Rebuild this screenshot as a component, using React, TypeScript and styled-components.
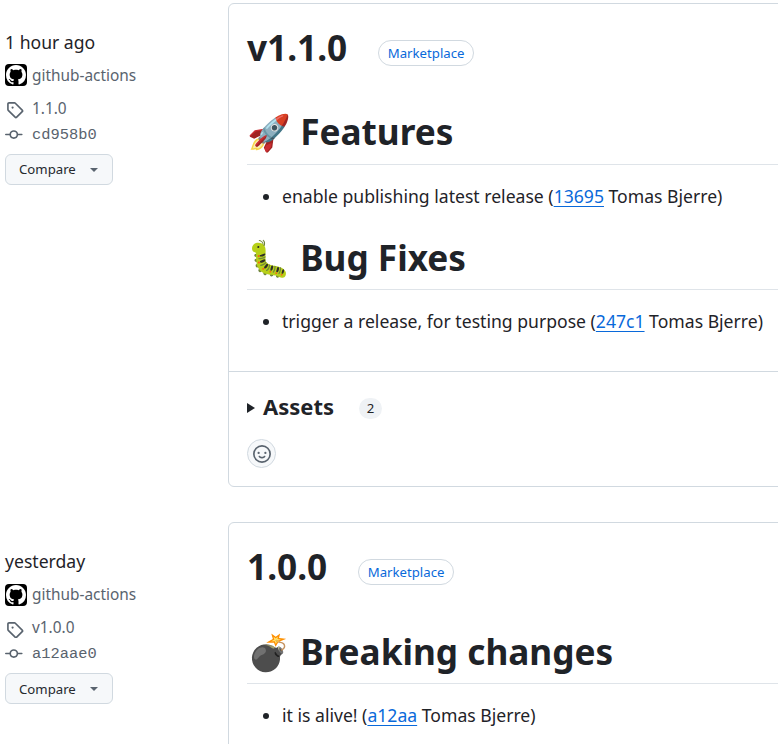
import React from 'react';
import styled, { createGlobalStyle } from 'styled-components';

const ICONS = {
  mark: 'M8 0c4.42 0 8 3.58 8 8a8.013 8.013 0 0 1-5.45 7.59c-.4.08-.55-.17-.55-.38 0-.27.01-1.13.01-2.2 0-.75-.25-1.23-.54-1.48 1.78-.2 3.65-.88 3.65-3.95 0-.88-.31-1.59-.82-2.15.08-.2.36-1.02-.08-2.12 0 0-.67-.22-2.2.82-.64-.18-1.32-.27-2-.27-.68 0-1.36.09-2 .27-1.53-1.03-2.2-.82-2.2-.82-.44 1.1-.16 1.92-.08 2.12-.51.56-.82 1.28-.82 2.15 0 3.06 1.86 3.75 3.64 3.95-.23.2-.44.55-.51 1.07-.46.21-1.61.55-2.33-.66-.15-.24-.6-.83-1.23-.82-.67.01-.27.38.01.53.34.19.73.9.82 1.13.16.45.68 1.31 2.69.94 0 .67.01 1.3.01 1.49 0 .21-.15.45-.55.38A7.995 7.995 0 0 1 0 8c0-4.42 3.58-8 8-8Z',
  tag: 'M1 7.775V2.75C1 1.784 1.784 1 2.75 1h5.025c.464 0 .91.184 1.238.513l6.25 6.25a1.75 1.75 0 0 1 0 2.474l-5.026 5.026a1.75 1.75 0 0 1-2.474 0l-6.25-6.25A1.752 1.752 0 0 1 1 7.775Zm1.5 0c0 .066.026.13.073.177l6.25 6.25a.25.25 0 0 0 .354 0l5.025-5.025a.25.25 0 0 0 0-.354l-6.25-6.25a.25.25 0 0 0-.177-.073H2.75a.25.25 0 0 0-.25.25ZM6 5a1 1 0 1 1 0 2 1 1 0 0 1 0-2Z',
  commit: 'M11.93 8.5a4.002 4.002 0 0 1-7.86 0H.75a.75.75 0 0 1 0-1.5h3.32a4.002 4.002 0 0 1 7.86 0h3.32a.75.75 0 0 1 0 1.5Zm-1.43-.75a2.5 2.5 0 1 0-5 0 2.5 2.5 0 0 0 5 0Z',
  smiley: 'M8 0a8 8 0 1 1 0 16A8 8 0 0 1 8 0ZM1.5 8a6.5 6.5 0 1 0 13 0 6.5 6.5 0 0 0-13 0Zm3.82 1.636a.75.75 0 0 1 1.038.175l.007.009c.103.118.22.222.35.31.264.178.683.37 1.285.37.602 0 1.02-.192 1.285-.371.13-.088.247-.192.35-.31l.007-.008a.75.75 0 0 1 1.222.87l-.022-.015c.02.013.021.015.021.015v.001l-.001.002-.002.003-.005.007-.014.019a2.066 2.066 0 0 1-.184.213c-.16.166-.338.316-.53.445-.63.418-1.37.638-2.127.629-.946 0-1.652-.308-2.126-.63a3.331 3.331 0 0 1-.715-.657l-.014-.02-.005-.006-.002-.003v-.002h-.001l.613-.432-.614.43a.75.75 0 0 1 .183-1.044ZM12 7a1 1 0 1 1-2 0 1 1 0 0 1 2 0ZM5 8a1 1 0 1 1 0-2 1 1 0 0 1 0 2Zm5.25 2.25.592.416a97.71 97.71 0 0 0-.592-.416Z',
};

const Octicon = ({ name, size }: { name: keyof typeof ICONS; size: number }) => (
  <svg width={size} height={size} viewBox="0 0 16 16" fill="currentColor" aria-hidden="true">
    <path d={ICONS[name]} />
  </svg>
);

const GlobalStyle = createGlobalStyle`
  html, body {
    margin: 0;
    padding: 0;
    background: #fff;
    overflow: hidden;
  }
  body {
    font-family: "Noto Sans", "Liberation Sans", sans-serif;
    color: #1f2328;
    font-size: 15.4px;
  }
`;

const Page = styled.div`
  width: 778px;
  height: 744px;
  overflow: hidden;
  padding-top: 3px;
  box-sizing: border-box;
`;

const Release = styled.section`
  display: grid;
  grid-template-columns: 228px 640px;
  margin-bottom: 35px;
`;

const Side = styled.aside<{ $top: number }>`
  padding: ${(p) => p.$top}px 0 0 5px;
  display: flex;
  flex-direction: column;
  align-items: flex-start;
`;

const When = styled.div`
  font-size: 17.6px;
  line-height: 24px;
  height: 24px;
  color: #1f2328;
`;

const Author = styled.div`
  display: flex;
  align-items: center;
  gap: 5px;
  margin-top: 9.4px;
  height: 24px;
  color: #59636e;
`;

const Avatar = styled.span`
  width: 22px;
  height: 22px;
  border-radius: 4px;
  background: #000;
  color: #fff;
  display: flex;
  align-items: center;
  justify-content: center;
`;

const MetaRow = styled.div<{ $mono?: boolean; $gap: number }>`
  display: flex;
  align-items: center;
  gap: ${(p) => p.$gap}px;
  height: 21px;
  color: #59636e;
  font-size: 15.4px;
  font-family: ${(p) => (p.$mono ? '"Liberation Mono", monospace' : 'inherit')};
  svg {
    flex: none;
  }
`;

const TagRow = styled(MetaRow)`
  margin-top: 10.6px;
  padding-left: 1px;
  svg {
    margin-top: 3px;
  }
`;

const CommitRow = styled(MetaRow)`
  margin-top: 5.3px;
`;

const CompareButton = styled.button`
  display: flex;
  align-items: center;
  margin-top: 8.7px;
  width: 108px;
  height: 31px;
  padding: 0 0 0 13px;
  box-sizing: border-box;
  border: 1px solid #d1d9e0;
  border-radius: 6px;
  background: #f6f8fa;
  color: #25292e;
  font: 400 13.2px "Noto Sans", sans-serif;
`;

const Caret = styled.span`
  width: 0;
  height: 0;
  margin: 1px 0 0 14px;
  border-style: solid;
  border-width: 4px 4px 0;
  border-color: #59636e transparent transparent;
`;

const Card = styled.article<{ $height: number }>`
  height: ${(p) => p.$height}px;
  border: 1px solid #d1d9e0;
  border-radius: 6px;
  box-sizing: border-box;
  display: flex;
  flex-direction: column;
`;

const Body = styled.div`
  padding: 15px 18px 0;
  flex: none;
`;

const TitleRow = styled.div`
  display: flex;
  align-items: center;
  height: 56px;
`;

const Title = styled.h1`
  margin: 0;
  font-size: 35.2px;
  line-height: 56px;
  font-weight: 700;
  color: #1f2328;
`;

const Pill = styled.span`
  margin-left: 31px;
  margin-top: 12px;
  height: 26px;
  padding: 0 8.5px;
  border: 1px solid #d1d9e0;
  border-radius: 13px;
  box-sizing: border-box;
  display: flex;
  align-items: center;
  color: #0969da;
  font-size: 13.2px;
  font-weight: 400;
`;

const Heading = styled.h2<{ $top: number; $leading: number }>`
  margin: ${(p) => p.$top}px 0 0;
  height: 56px;
  border-bottom: 1px solid #d1d9e0b3;
  font-size: 35.2px;
  line-height: ${(p) => p.$leading}px;
  font-weight: 700;
  color: #1f2328;
  white-space: nowrap;
`;

const List = styled.ul`
  margin: 15px 0 0;
  padding: 0 0 0 35px;
  font-size: 17.6px;
  line-height: 32px;
  white-space: nowrap;
  li {
    height: 32px;
  }
  a {
    color: #0969da;
    text-decoration: underline;
    text-underline-offset: 3px;
  }
`;

const Footer = styled.div`
  border-top: 1px solid #d1d9e0;
  margin-top: 34px;
  padding: 16px 18px 0;
`;

const Assets = styled.div`
  display: flex;
  align-items: center;
  height: 36px;
`;

const Triangle = styled.span`
  width: 0;
  height: 0;
  margin: 4px 8px 0 0;
  border-style: solid;
  border-width: 5px 0 5px 8px;
  border-color: transparent transparent transparent #1f2328;
`;

const AssetsLabel = styled.strong`
  font-size: 22px;
  font-weight: 700;
  line-height: 36px;
`;

const Count = styled.span`
  margin-left: 25px;
  margin-top: 4px;
  width: 23px;
  height: 21px;
  border-radius: 11px;
  background: #eff2f5;
  color: #1f2328;
  font-size: 13.2px;
  font-weight: 400;
  display: flex;
  align-items: center;
  justify-content: center;
`;

const Reaction = styled.span`
  margin-top: 15px;
  width: 29px;
  height: 29px;
  box-sizing: border-box;
  border: 1px solid #d1d9e0;
  border-radius: 50%;
  background: #f6f8fa;
  color: #59636e;
  display: flex;
  align-items: center;
  justify-content: center;
`;

type SidebarProps = { top: number; when: string; tag: string; sha: string };

const Sidebar = ({ top, when, tag, sha }: SidebarProps) => (
  <Side $top={top}>
    <When>{when}</When>
    <Author>
      <Avatar>
        <Octicon name="mark" size={20} />
      </Avatar>
      github-actions
    </Author>
    <TagRow $gap={8.4}>
      <Octicon name="tag" size={17.6} />
      {tag}
    </TagRow>
    <CommitRow $mono $gap={9.4}>
      <Octicon name="commit" size={17.6} />
      {sha}
    </CommitRow>
    <CompareButton>
      Compare
      <Caret />
    </CompareButton>
  </Side>
);

const App = () => (
  <Page>
    <GlobalStyle />
    <Release>
      <Sidebar top={27} when="1 hour ago" tag="1.1.0" sha="cd958b0" />
      <Card $height={484}>
        <Body>
          <TitleRow>
            <Title>v1.1.0</Title>
            <Pill>Marketplace</Pill>
          </TitleRow>
          <Heading $top={33} $leading={46}>🚀 Features</Heading>
          <List>
            <li>
              enable publishing latest release (<a href="#a">13695</a> Tomas Bjerre)
            </li>
          </List>
          <Heading $top={21} $leading={48}>🐛 Bug Fixes</Heading>
          <List>
            <li>
              trigger a release, for testing purpose (<a href="#b">247c1</a> Tomas Bjerre)
            </li>
          </List>
        </Body>
        <Footer>
          <Assets>
            <Triangle />
            <AssetsLabel>Assets</AssetsLabel>
            <Count>2</Count>
          </Assets>
          <Reaction>
            <Octicon name="smiley" size={18} />
          </Reaction>
        </Footer>
      </Card>
    </Release>
    <Release>
      <Sidebar top={27.4} when="yesterday" tag="v1.0.0" sha="a12aae0" />
      <Card $height={400}>
        <Body>
          <TitleRow>
            <Title>1.0.0</Title>
            <Pill>Marketplace</Pill>
          </TitleRow>
          <Heading $top={33} $leading={48}>💣 Breaking changes</Heading>
          <List>
            <li>
              it is alive! (<a href="#c">a12aa</a> Tomas Bjerre)
            </li>
          </List>
        </Body>
      </Card>
    </Release>
  </Page>
);

export default App;
